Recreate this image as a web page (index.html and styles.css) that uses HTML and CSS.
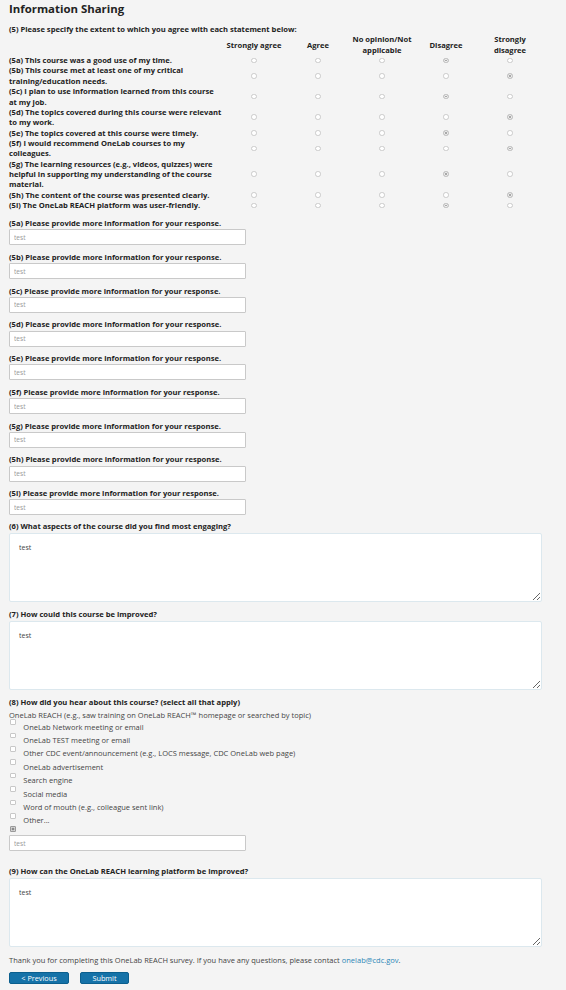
FILE: index.html
```html
<!DOCTYPE html>
<html lang="en">
<head>
<meta charset="utf-8">
<title>Information Sharing</title>
<link rel="stylesheet" href="styles.css">
</head>
<body>
<main class="page">
  <h1 class="title">Information Sharing</h1>

  <section class="matrix">
    <p class="q">(5) Please specify the extent to which you agree with each statement below:</p>
    <div class="grid">
      <div class="hd"></div>
      <div class="hd">Strongly agree</div>
      <div class="hd">Agree</div>
      <div class="hd">No opinion/Not applicable</div>
      <div class="hd">Disagree</div>
      <div class="hd">Strongly disagree</div>

      <div class="st">(5a) This course was a good use of my time.</div>
      <div class="rc"><span class="radio"></span></div><div class="rc"><span class="radio"></span></div><div class="rc"><span class="radio"></span></div><div class="rc"><span class="radio on"></span></div><div class="rc"><span class="radio"></span></div>

      <div class="st">(5b) This course met at least one of my critical training/education needs.</div>
      <div class="rc"><span class="radio"></span></div><div class="rc"><span class="radio"></span></div><div class="rc"><span class="radio"></span></div><div class="rc"><span class="radio"></span></div><div class="rc"><span class="radio on"></span></div>

      <div class="st">(5c) I plan to use information learned from this course at my job.</div>
      <div class="rc"><span class="radio"></span></div><div class="rc"><span class="radio"></span></div><div class="rc"><span class="radio"></span></div><div class="rc"><span class="radio on"></span></div><div class="rc"><span class="radio"></span></div>

      <div class="st">(5d) The topics covered during this course were relevant to my work.</div>
      <div class="rc"><span class="radio"></span></div><div class="rc"><span class="radio"></span></div><div class="rc"><span class="radio"></span></div><div class="rc"><span class="radio"></span></div><div class="rc"><span class="radio on"></span></div>

      <div class="st">(5e) The topics covered at this course were timely.</div>
      <div class="rc"><span class="radio"></span></div><div class="rc"><span class="radio"></span></div><div class="rc"><span class="radio"></span></div><div class="rc"><span class="radio on"></span></div><div class="rc"><span class="radio"></span></div>

      <div class="st">(5f) I would recommend OneLab courses to my colleagues.</div>
      <div class="rc"><span class="radio"></span></div><div class="rc"><span class="radio"></span></div><div class="rc"><span class="radio"></span></div><div class="rc"><span class="radio"></span></div><div class="rc"><span class="radio on"></span></div>

      <div class="st">(5g) The learning resources (e.g., videos, quizzes) were helpful in supporting my understanding of the course material.</div>
      <div class="rc"><span class="radio"></span></div><div class="rc"><span class="radio"></span></div><div class="rc"><span class="radio"></span></div><div class="rc"><span class="radio on"></span></div><div class="rc"><span class="radio"></span></div>

      <div class="st">(5h) The content of the course was presented clearly.</div>
      <div class="rc"><span class="radio"></span></div><div class="rc"><span class="radio"></span></div><div class="rc"><span class="radio"></span></div><div class="rc"><span class="radio"></span></div><div class="rc"><span class="radio on"></span></div>

      <div class="st">(5i) The OneLab REACH platform was user-friendly.</div>
      <div class="rc"><span class="radio"></span></div><div class="rc"><span class="radio"></span></div><div class="rc"><span class="radio"></span></div><div class="rc"><span class="radio on"></span></div><div class="rc"><span class="radio"></span></div>
    </div>
  </section>

  <section class="shorts">
    <div class="field"><label class="q">(5a) Please provide more information for your response.</label><input class="text" type="text" value="test"></div>
    <div class="field"><label class="q">(5b) Please provide more information for your response.</label><input class="text" type="text" value="test"></div>
    <div class="field"><label class="q">(5c) Please provide more information for your response.</label><input class="text" type="text" value="test"></div>
    <div class="field"><label class="q">(5d) Please provide more information for your response.</label><input class="text" type="text" value="test"></div>
    <div class="field"><label class="q">(5e) Please provide more information for your response.</label><input class="text" type="text" value="test"></div>
    <div class="field"><label class="q">(5f) Please provide more information for your response.</label><input class="text" type="text" value="test"></div>
    <div class="field"><label class="q">(5g) Please provide more information for your response.</label><input class="text" type="text" value="test"></div>
    <div class="field"><label class="q">(5h) Please provide more information for your response.</label><input class="text" type="text" value="test"></div>
    <div class="field"><label class="q">(5i) Please provide more information for your response.</label><input class="text" type="text" value="test"></div>
  </section>

  <div class="long">
    <label class="q">(6) What aspects of the course did you find most engaging?</label>
    <textarea class="area">test</textarea>
  </div>
  <div class="long">
    <label class="q">(7) How could this course be improved?</label>
    <textarea class="area">test</textarea>
  </div>

  <section class="checks">
    <p class="q">(8) How did you hear about this course? (select all that apply)</p>
    <div class="lead">OneLab REACH (e.g., saw training on OneLab REACH™ homepage or searched by topic)</div>
    <div class="opt"><span class="box"></span><span class="optext">OneLab Network meeting or email</span></div>
    <div class="opt"><span class="box"></span><span class="optext">OneLab TEST meeting or email</span></div>
    <div class="opt"><span class="box"></span><span class="optext">Other CDC event/announcement (e.g., LOCS message, CDC OneLab web page)</span></div>
    <div class="opt"><span class="box"></span><span class="optext">OneLab advertisement</span></div>
    <div class="opt"><span class="box"></span><span class="optext">Search engine</span></div>
    <div class="opt"><span class="box"></span><span class="optext">Social media</span></div>
    <div class="opt"><span class="box"></span><span class="optext">Word of mouth (e.g., colleague sent link)</span></div>
    <div class="opt"><span class="box"></span><span class="optext">Other...</span></div>
    <div class="opt last"><span class="box on"></span></div>
    <input class="text" type="text" value="test">
  </section>

  <div class="long q9">
    <label class="q">(9) How can the OneLab REACH learning platform be improved?</label>
    <textarea class="area">test</textarea>
  </div>

  <p class="thanks">Thank you for completing this OneLab REACH survey. If you have any questions, please contact <a href="#">onelab@cdc.gov</a>.</p>

  <div class="actions">
    <button class="btn prev">&lt; Previous</button>
    <button class="btn submit">Submit</button>
  </div>
</main>
</body>
</html>
```

FILE: styles.css
```css
* { box-sizing: border-box; }

html, body {
  margin: 0;
  padding: 0;
  background: #f4f4f4;
}

body {
  font-family: "Open Sans", "DejaVu Sans", sans-serif;
  font-size: 7.6px;
  color: #333;
}

.page {
  width: 551px;
  padding: 1px 0 0 9px;
}

.title {
  margin: 0;
  font-size: 11.4px;
  line-height: 16px;
  font-weight: 700;
  color: #222;
}

.q {
  display: block;
  margin: 0;
  font-weight: 700;
  line-height: 10.36px;
  color: #222;
}

.matrix { margin-top: 7px; }

.grid {
  display: grid;
  grid-template-columns: 213px repeat(5, 64px);
  line-height: 10.36px;
}

.hd {
  font-weight: 700;
  color: #222;
  text-align: center;
  display: flex;
  align-items: center;
  justify-content: center;
  padding: 0 1px;
}

.st {
  font-weight: 700;
  color: #222;
}

.rc {
  display: flex;
  align-items: center;
  justify-content: center;
}

.radio {
  width: 5.5px;
  height: 5.5px;
  border: 1px solid #cacaca;
  border-radius: 50%;
  background: #fff;
}

.radio.on {
  background: #a8a8a8;
  border-color: #c4c4c4;
  box-shadow: inset 0 0 0 0.7px #fff;
}

.shorts { margin-top: 7.6px; }

.field {
  display: flex;
  flex-direction: column;
  gap: 1px;
  margin-bottom: 6.4px;
}

.text {
  display: block;
  width: 237px;
  height: 16px;
  margin: 0;
  padding: 0 0 0 4px;
  border: 1px solid #c9c9c9;
  border-radius: 1px;
  background: #fff;
  font-family: inherit;
  font-size: 6.6px;
  color: #999;
  outline: none;
}

.long {
  display: flex;
  flex-direction: column;
  gap: 1px;
  margin-bottom: 7.6px;
}

.shorts + .long { margin-top: -0.6px; }

.area {
  display: block;
  width: 533px;
  height: 69px;
  margin: 0;
  padding: 9px 9px;
  border: 1.5px solid #dce8ee;
  border-radius: 2px;
  background: #fff;
  font-family: inherit;
  font-size: 7px;
  line-height: 10px;
  color: #444;
  resize: vertical;
  outline: none;
}

.checks .q { margin-bottom: 2.6px; }

.lead {
  line-height: 10.4px;
  font-size: 7.5px;
  color: #444;
  margin-bottom: -1.2px;
}

.opt {
  display: flex;
  align-items: flex-start;
  height: 13.4px;
  color: #444;
}

.optext {
  padding-top: 2.4px;
  line-height: 10px;
  font-size: 7.5px;
}

.box {
  flex: none;
  width: 5.5px;
  height: 5.5px;
  margin: 0 7.8px 0 1px;
  border: 1px solid #c8c8c8;
  border-radius: 1px;
  background: #fff;
}

.box.on {
  background: #8a8a8a;
  border-color: #9a9a9a;
  box-shadow: inset 0 0 0 0.7px #ddd;
}

.opt.last { height: 6px; margin-bottom: 3px; }

.checks .text { margin-bottom: 15px; }

.q9 { margin-bottom: 8px; }

.thanks {
  margin: 0;
  line-height: 10.4px;
  font-size: 7.5px;
  color: #444;
}

.thanks a {
  color: #2a86b6;
  text-decoration: none;
}

.actions {
  display: flex;
  gap: 11px;
  margin-top: 7.2px;
}

.btn {
  height: 12px;
  margin: 0;
  padding: 0;
  border: 1px solid #0b5f8e;
  border-radius: 2px;
  background: #1572a8;
  color: #fff;
  font-family: inherit;
  font-size: 7.3px;
  line-height: 10px;
}

.prev { width: 60px; }
.submit { width: 49px; }
```
